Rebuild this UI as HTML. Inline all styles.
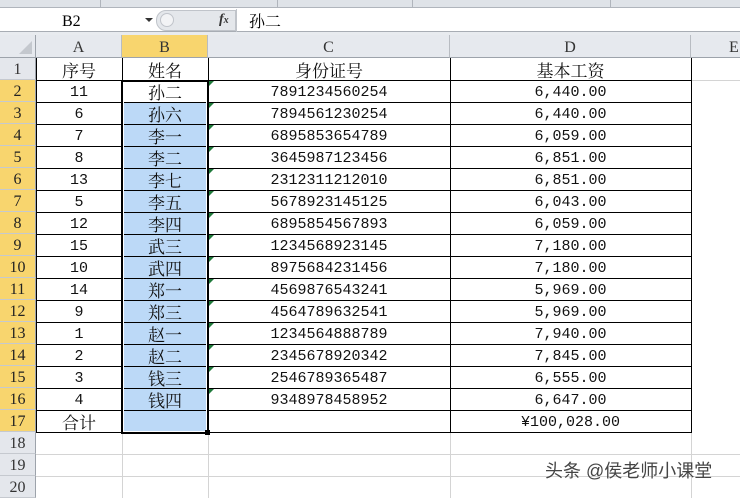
<!DOCTYPE html><html><head><meta charset="utf-8"><style>
*{margin:0;padding:0;box-sizing:border-box}
body{width:740px;height:494px;overflow:hidden;background:#fff;position:relative;font-family:"Liberation Mono","Noto Serif CJK SC",serif;font-size:15px;color:#000}
.a{position:absolute}
.g{position:absolute;background:#d4d4d4}
.b{position:absolute;background:#000}
.rh{position:absolute;left:0;width:36px;height:22px;background:#e4e7ec;border-bottom:1px solid #c5c9cf;border-right:1px solid #9da3ab;text-align:center;line-height:24px;color:#333;font-size:16px;font-family:"Liberation Serif",serif}
.rh.s{background:#f8d56e;color:#222}
.ch{position:absolute;top:35px;height:23px;background:#e6e9ee;border-right:1px solid #b8bcc2;border-bottom:1px solid #9da3ab;text-align:center;line-height:25px;color:#333;font-family:"Liberation Serif",serif;font-size:16px}
.c{position:absolute;height:22px;line-height:25px;text-align:center;color:#111}
.k{font-family:"Noto Serif CJK SC",serif;font-size:17px;line-height:24px}
.tri{position:absolute;width:0;height:0;border-top:5px solid #1f7a3a;border-right:5px solid transparent}
</style></head><body>
<div class="a" style="left:0;top:0;width:740px;height:8px;background:#dfe3e8;border-bottom:1px solid #b0b5bc"></div>
<div class="a" style="left:100px;top:0;width:1px;height:8px;background:#b0b5bc"></div>
<div class="a" style="left:277px;top:0;width:1px;height:8px;background:#b0b5bc"></div>
<div class="a" style="left:412px;top:0;width:1px;height:8px;background:#b0b5bc"></div>
<div class="a" style="left:610px;top:0;width:1px;height:8px;background:#b0b5bc"></div>
<div class="a" style="left:0;top:9px;width:740px;height:23px;background:#fff;border-bottom:1px solid #a8adb4"></div>
<div class="a" style="left:0;top:32px;width:740px;height:3px;background:#e8ebef"></div>
<div class="a" style="left:62px;top:12px;font-size:15px;line-height:20px;font-family:'Liberation Serif',serif;font-size:16px">B2</div>
<div class="a" style="left:145px;top:18px;width:0;height:0;border-left:4px solid transparent;border-right:4px solid transparent;border-top:4px solid #333"></div>
<div class="a" style="left:156px;top:10px;width:80px;height:21px;background:#e4e7eb;border-radius:10px 0 0 10px;border:1px solid #c0c4ca"></div>
<div class="a" style="left:160px;top:13px;width:14px;height:14px;border-radius:7px;background:#f2f3f5;border:1px solid #c0c4ca"></div>
<div class="a" style="left:236px;top:9px;width:1px;height:23px;background:#c0c4ca"></div>
<div class="a" style="left:219px;top:11px;font-family:'Liberation Serif',serif;font-style:italic;font-weight:bold;font-size:14px;line-height:18px;color:#333">f<span style="font-size:10px">x</span></div>
<div class="a" style="left:249px;top:10px;font-family:'Noto Serif CJK SC',serif;font-size:16px;line-height:22px">孙二</div>

<div class="a" style="left:0;top:35px;width:36px;height:23px;background:#e6e9ee;border-right:1px solid #9da3ab;border-bottom:1px solid #9da3ab"></div>
<div class="a" style="left:19px;top:41px;width:0;height:0;border-left:13px solid transparent;border-bottom:13px solid #c4c8ce"></div>
<div class="ch" style="left:36px;width:86px">A</div>
<div class="ch" style="left:122px;width:86px;background:#f8d56e">B</div>
<div class="ch" style="left:208px;width:242px">C</div>
<div class="ch" style="left:450px;width:241px">D</div>
<div class="ch" style="left:691px;width:60px;text-align:left;padding-left:38px">E</div>

<div class="g" style="left:122px;top:58px;width:1px;height:440px"></div>
<div class="g" style="left:208px;top:58px;width:1px;height:440px"></div>
<div class="g" style="left:450px;top:58px;width:1px;height:440px"></div>
<div class="g" style="left:691px;top:58px;width:1px;height:440px"></div>
<div class="g" style="left:36px;top:454px;width:704px;height:1px"></div>
<div class="g" style="left:36px;top:476px;width:704px;height:1px"></div>
<div class="g" style="left:691px;top:80px;width:49px;height:1px"></div>

<div class="a" style="left:122px;top:102px;width:86px;height:330px;background:#bcd9f7"></div>

<div class="b" style="left:36px;top:58px;width:1px;height:375px"></div>
<div class="b" style="left:122px;top:58px;width:1px;height:375px"></div>
<div class="b" style="left:208px;top:58px;width:1px;height:375px"></div>
<div class="b" style="left:450px;top:58px;width:1px;height:375px"></div>
<div class="b" style="left:691px;top:58px;width:1px;height:375px"></div>
<div class="b" style="left:36px;top:80px;width:656px;height:1px"></div>
<div class="b" style="left:36px;top:102px;width:656px;height:1px"></div>
<div class="b" style="left:36px;top:124px;width:656px;height:1px"></div>
<div class="b" style="left:36px;top:146px;width:656px;height:1px"></div>
<div class="b" style="left:36px;top:168px;width:656px;height:1px"></div>
<div class="b" style="left:36px;top:190px;width:656px;height:1px"></div>
<div class="b" style="left:36px;top:212px;width:656px;height:1px"></div>
<div class="b" style="left:36px;top:234px;width:656px;height:1px"></div>
<div class="b" style="left:36px;top:256px;width:656px;height:1px"></div>
<div class="b" style="left:36px;top:278px;width:656px;height:1px"></div>
<div class="b" style="left:36px;top:300px;width:656px;height:1px"></div>
<div class="b" style="left:36px;top:322px;width:656px;height:1px"></div>
<div class="b" style="left:36px;top:344px;width:656px;height:1px"></div>
<div class="b" style="left:36px;top:366px;width:656px;height:1px"></div>
<div class="b" style="left:36px;top:388px;width:656px;height:1px"></div>
<div class="b" style="left:36px;top:410px;width:656px;height:1px"></div>
<div class="b" style="left:36px;top:432px;width:656px;height:1px"></div>
<div class="a" style="left:121px;top:80px;width:88px;height:354px;border:2px solid #000"></div>
<div class="a" style="left:123px;top:82px;width:84px;height:350px;border:1px solid #fff"></div>
<div class="a" style="left:205px;top:430px;width:5px;height:5px;background:#000"></div>

<div class="rh" style="top:58px">1</div>
<div class="rh s" style="top:80px">2</div>
<div class="rh s" style="top:102px">3</div>
<div class="rh s" style="top:124px">4</div>
<div class="rh s" style="top:146px">5</div>
<div class="rh s" style="top:168px">6</div>
<div class="rh s" style="top:190px">7</div>
<div class="rh s" style="top:212px">8</div>
<div class="rh s" style="top:234px">9</div>
<div class="rh s" style="top:256px">10</div>
<div class="rh s" style="top:278px">11</div>
<div class="rh s" style="top:300px">12</div>
<div class="rh s" style="top:322px">13</div>
<div class="rh s" style="top:344px">14</div>
<div class="rh s" style="top:366px">15</div>
<div class="rh s" style="top:388px">16</div>
<div class="rh s" style="top:410px">17</div>
<div class="rh" style="top:432px">18</div>
<div class="rh" style="top:454px">19</div>
<div class="rh" style="top:476px">20</div>

<div class="c k" style="left:36px;top:58px;width:86px">序号</div><div class="c k" style="left:122px;top:58px;width:86px">姓名</div><div class="c k" style="left:208px;top:58px;width:242px">身份证号</div><div class="c k" style="left:450px;top:58px;width:241px">基本工资</div>
<div class="c" style="left:36px;top:80px;width:86px">11</div><div class="c k" style="left:122px;top:80px;width:86px">孙二</div><div class="c" style="left:208px;top:80px;width:242px">7891234560254</div><div class="c" style="left:450px;top:80px;width:241px">6,440.00</div>
<div class="c" style="left:36px;top:102px;width:86px">6</div><div class="c k" style="left:122px;top:102px;width:86px">孙六</div><div class="c" style="left:208px;top:102px;width:242px">7894561230254</div><div class="c" style="left:450px;top:102px;width:241px">6,440.00</div>
<div class="c" style="left:36px;top:124px;width:86px">7</div><div class="c k" style="left:122px;top:124px;width:86px">李一</div><div class="c" style="left:208px;top:124px;width:242px">6895853654789</div><div class="c" style="left:450px;top:124px;width:241px">6,059.00</div>
<div class="c" style="left:36px;top:146px;width:86px">8</div><div class="c k" style="left:122px;top:146px;width:86px">李二</div><div class="c" style="left:208px;top:146px;width:242px">3645987123456</div><div class="c" style="left:450px;top:146px;width:241px">6,851.00</div>
<div class="c" style="left:36px;top:168px;width:86px">13</div><div class="c k" style="left:122px;top:168px;width:86px">李七</div><div class="c" style="left:208px;top:168px;width:242px">2312311212010</div><div class="c" style="left:450px;top:168px;width:241px">6,851.00</div>
<div class="c" style="left:36px;top:190px;width:86px">5</div><div class="c k" style="left:122px;top:190px;width:86px">李五</div><div class="c" style="left:208px;top:190px;width:242px">5678923145125</div><div class="c" style="left:450px;top:190px;width:241px">6,043.00</div>
<div class="c" style="left:36px;top:212px;width:86px">12</div><div class="c k" style="left:122px;top:212px;width:86px">李四</div><div class="c" style="left:208px;top:212px;width:242px">6895854567893</div><div class="c" style="left:450px;top:212px;width:241px">6,059.00</div>
<div class="c" style="left:36px;top:234px;width:86px">15</div><div class="c k" style="left:122px;top:234px;width:86px">武三</div><div class="c" style="left:208px;top:234px;width:242px">1234568923145</div><div class="c" style="left:450px;top:234px;width:241px">7,180.00</div>
<div class="c" style="left:36px;top:256px;width:86px">10</div><div class="c k" style="left:122px;top:256px;width:86px">武四</div><div class="c" style="left:208px;top:256px;width:242px">8975684231456</div><div class="c" style="left:450px;top:256px;width:241px">7,180.00</div>
<div class="c" style="left:36px;top:278px;width:86px">14</div><div class="c k" style="left:122px;top:278px;width:86px">郑一</div><div class="c" style="left:208px;top:278px;width:242px">4569876543241</div><div class="c" style="left:450px;top:278px;width:241px">5,969.00</div>
<div class="c" style="left:36px;top:300px;width:86px">9</div><div class="c k" style="left:122px;top:300px;width:86px">郑三</div><div class="c" style="left:208px;top:300px;width:242px">4564789632541</div><div class="c" style="left:450px;top:300px;width:241px">5,969.00</div>
<div class="c" style="left:36px;top:322px;width:86px">1</div><div class="c k" style="left:122px;top:322px;width:86px">赵一</div><div class="c" style="left:208px;top:322px;width:242px">1234564888789</div><div class="c" style="left:450px;top:322px;width:241px">7,940.00</div>
<div class="c" style="left:36px;top:344px;width:86px">2</div><div class="c k" style="left:122px;top:344px;width:86px">赵二</div><div class="c" style="left:208px;top:344px;width:242px">2345678920342</div><div class="c" style="left:450px;top:344px;width:241px">7,845.00</div>
<div class="c" style="left:36px;top:366px;width:86px">3</div><div class="c k" style="left:122px;top:366px;width:86px">钱三</div><div class="c" style="left:208px;top:366px;width:242px">2546789365487</div><div class="c" style="left:450px;top:366px;width:241px">6,555.00</div>
<div class="c" style="left:36px;top:388px;width:86px">4</div><div class="c k" style="left:122px;top:388px;width:86px">钱四</div><div class="c" style="left:208px;top:388px;width:242px">9348978458952</div><div class="c" style="left:450px;top:388px;width:241px">6,647.00</div>
<div class="c k" style="left:36px;top:410px;width:86px">合计</div><div class="c" style="left:450px;top:410px;width:241px">¥100,028.00</div>

<div class="tri" style="left:209px;top:81px"></div><div class="tri" style="left:209px;top:103px"></div><div class="tri" style="left:209px;top:125px"></div><div class="tri" style="left:209px;top:147px"></div><div class="tri" style="left:209px;top:169px"></div><div class="tri" style="left:209px;top:191px"></div><div class="tri" style="left:209px;top:213px"></div><div class="tri" style="left:209px;top:235px"></div><div class="tri" style="left:209px;top:257px"></div><div class="tri" style="left:209px;top:279px"></div><div class="tri" style="left:209px;top:301px"></div><div class="tri" style="left:209px;top:323px"></div><div class="tri" style="left:209px;top:345px"></div><div class="tri" style="left:209px;top:367px"></div><div class="tri" style="left:209px;top:389px"></div>

<div class="a" style="left:545px;top:459px;font-family:'Liberation Sans','Noto Sans CJK SC',sans-serif;font-size:18px;color:#444;line-height:24px">头条 @侯老师小课堂</div>
</body></html>
